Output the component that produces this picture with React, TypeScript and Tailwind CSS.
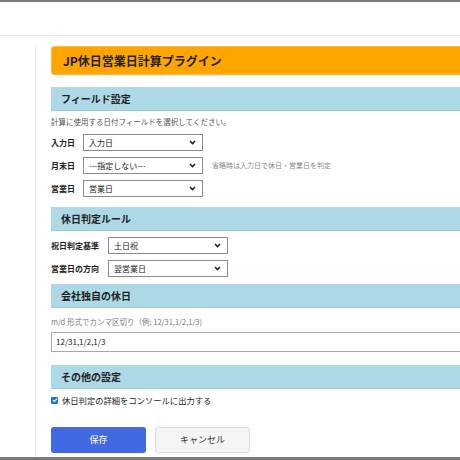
import React from 'react'

const Chevron = () => (
  <svg width="7" height="5" viewBox="0 0 7 5" className="mr-[6px]">
    <path d="M1 1l2.5 2.5L6 1" fill="none" stroke="#222" strokeWidth="1.6" />
  </svg>
)

const FakeSelect = ({ value }: { value: string }) => (
  <div className="w-[120px] h-[17px] border border-[#8c8c8c] bg-white flex items-center justify-between pl-[5px] text-[8px] text-[#222]">
    <span>{value}</span>
    <Chevron />
  </div>
)

const SectionHeader = ({ title, className }: { title: string; className: string }) => (
  <div className={`h-[24px] bg-[#add8e6] border-b border-[#9bcadb] flex items-center pl-[10px] text-[10px] font-bold text-[#222] ${className}`}>
    {title}
  </div>
)

const App = () => {
  return (
    <div className="w-[460px] h-[460px] overflow-hidden bg-white flex flex-col font-['Noto_Sans_CJK_JP','Noto_Sans',sans-serif]">
      <div className="h-[2px] bg-[#7a7a7a]"></div>
      <div className="h-[34px] border-b border-[#e6e6e6]"></div>

      <div className="flex flex-1 min-h-0">
        <div className="w-[36px] shrink-0 mt-[10px] border-r border-[#e6e6e6]"></div>

        <div className="w-[560px] shrink-0 pl-[15px] pt-[10px]">
          {/* タイトル */}
          <div className="h-[29px] bg-[#ffa500] border border-[#ffb940] rounded-l-[3px] flex items-center pl-[11px] text-[12px] font-bold text-[#222]">
            JP休日営業日計算プラグイン
          </div>

          {/* フィールド設定 */}
          <SectionHeader title="フィールド設定" className="mt-[12px]" />
          <p className="mt-[5px] text-[7.5px] leading-[12px] text-[#555]">計算に使用する日付フィールドを選択してください。</p>
          <div className="mt-[6px] flex flex-col gap-[6px]">
            <div className="flex items-center">
              <span className="text-[8px] font-bold text-[#222] mr-[8px]">入力日</span>
              <FakeSelect value="入力日" />
            </div>
            <div className="flex items-center">
              <span className="text-[8px] font-bold text-[#222] mr-[8px]">月末日</span>
              <FakeSelect value="---指定しない---" />
              <span className="ml-[9px] text-[7px] text-[#888]">省略時は入力日で休日・営業日を判定</span>
            </div>
            <div className="flex items-center">
              <span className="text-[8px] font-bold text-[#222] mr-[8px]">営業日</span>
              <FakeSelect value="営業日" />
            </div>
          </div>

          {/* 休日判定ルール */}
          <SectionHeader title="休日判定ルール" className="mt-[10px]" />
          <div className="mt-[6px] flex flex-col gap-[6px]">
            <div className="flex items-center">
              <span className="text-[8px] font-bold text-[#222] mr-[9px]">祝日判定基準</span>
              <FakeSelect value="土日祝" />
            </div>
            <div className="flex items-center">
              <span className="text-[8px] font-bold text-[#222] mr-[9px]">営業日の方向</span>
              <FakeSelect value="翌営業日" />
            </div>
          </div>

          {/* 会社独自の休日 */}
          <SectionHeader title="会社独自の休日" className="mt-[7px]" />
          <p className="mt-[8px] text-[7.5px] leading-[12px] text-[#777]">m/d 形式でカンマ区切り（例: 12/31,1/2,1/3)</p>
          <div className="mt-[4px] h-[20px] border border-[#a8a8a8] flex items-center pl-[4px] text-[8px] text-[#222]">
            12/31,1/2,1/3
          </div>

          {/* その他の設定 */}
          <SectionHeader title="その他の設定" className="mt-[13px]" />
          <div className="mt-[5px] h-[12px] flex items-center gap-[4px]">
            <div className="w-[7px] h-[7px] bg-[#1a73e8] rounded-[1px] flex items-center justify-center">
              <svg width="6" height="6" viewBox="0 0 6 6">
                <path d="M1 3.2l1.3 1.3L5 1.6" fill="none" stroke="white" strokeWidth="1.2" />
              </svg>
            </div>
            <span className="text-[8.3px] text-[#222]">休日判定の詳細をコンソールに出力する</span>
          </div>

          {/* ボタン */}
          <div className="mt-[21px] flex gap-[9px]">
            <button className="w-[95px] h-[26px] bg-[#4169e1] rounded-[3px] text-white text-[9px]">保存</button>
            <button className="w-[95px] h-[26px] bg-[#f5f5f5] border border-[#dcdcdc] rounded-[3px] text-[#333] text-[9px]">キャンセル</button>
          </div>
        </div>
      </div>

      <div className="h-[3px] bg-[#7a7a7a]"></div>
    </div>
  )
}

export default App
